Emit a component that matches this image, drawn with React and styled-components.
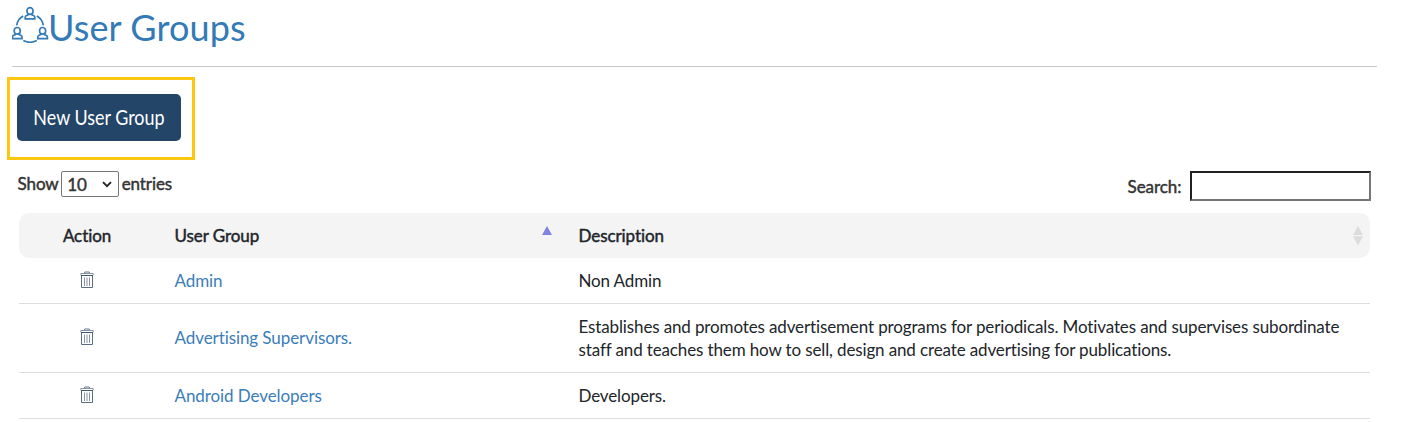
import React from "react";
import styled, { createGlobalStyle } from "styled-components";

const GlobalStyle = createGlobalStyle`
  *, *::before, *::after { box-sizing: border-box; }
  body {
    margin: 0;
    background: #fff;
    color: #212529;
    font-family: Lato, "Liberation Sans", sans-serif;
    font-size: 17px;
    font-variant-ligatures: none;
    letter-spacing: -0.08px;
    line-height: 23px;
    overflow: hidden;
  }
`;

const Page = styled.main`
  height: 422px;
  padding: 0 27px 0 12px;
  overflow: hidden;
`;

const Title = styled.h1`
  display: flex;
  align-items: flex-start;
  height: 67px;
  margin: 0;
  border-bottom: 1px solid #c8c8c8;
  color: #337ab7;
  font-size: 36px;
  font-weight: 400;
  letter-spacing: 0.12px;
  line-height: 44px;
`;

const TitleText = styled.span`
  margin-left: -1px;
  padding-top: 5px;
`;

const GroupGlyph = styled.svg`
  flex: none;
  width: 37px;
  height: 37px;
  margin-top: 6px;
`;

const Highlight = styled.div`
  width: 188px;
  height: 83px;
  margin: 10px 0 0 -5px;
  padding: 14px 7px;
  border: 3px solid #fdc70f;
`;

const PrimaryButton = styled.button`
  display: flex;
  justify-content: center;
  width: 164px;
  height: 47px;
  padding: 0;
  border: 0;
  border-radius: 5px;
  background: #234567;
  color: #fff;
  font: 400 20.5px/47px Lato, sans-serif;
`;

const ButtonLabel = styled.span`
  flex: none;
  transform: scaleX(0.875);
`;

const Controls = styled.div`
  display: flex;
  justify-content: space-between;
  height: 53px;
  padding: 11px 6px 0 5.5px;
  color: #333;
`;

const Control = styled.label`
  display: flex;
  align-items: center;
  height: ${(p) => p.$height}px;
  gap: ${(p) => p.$gap}px;
  -webkit-text-stroke: 0.45px currentColor;
`;

const ControlText = styled.span`
  padding-bottom: ${(p) => p.$raise || 0}px;
`;

const LengthBox = styled.span`
  display: flex;
  align-items: center;
  justify-content: space-between;
  width: 58px;
  height: 26px;
  padding: 0 6px 0 5px;
  border: 1px solid #767676;
  border-radius: 2px;
`;

const SearchInput = styled.input`
  width: 181px;
  height: 30px;
  border: 2px solid;
  border-color: #212121 #767676 #767676 #212121;
  background: #fff;
`;

const Table = styled.div`
  margin: 0 7px;
`;

const Row = styled.div`
  display: grid;
  grid-template-columns: 136px 404px 1fr;
  align-items: center;
  height: ${(p) => p.$height}px;
  border-bottom: 1px solid #ddd;
`;

const HeaderRow = styled(Row)`
  border: 0;
  border-radius: 10px;
  background: #f4f4f4;
  -webkit-text-stroke: 0.45px currentColor;
`;

const Cell = styled.div`
  display: flex;
  align-items: center;
  justify-content: ${(p) => (p.$center ? "center" : "space-between")};
  padding: ${(p) => (p.$center ? "0" : "0 6px 0 19.5px")};
  padding-bottom: ${(p) => (p.$tall ? 2 : 0)}px;
`;

const Description = styled.div`
  max-width: 800px;
  padding-left: 19.5px;
  letter-spacing: -0.13px;
`;

const GroupLink = styled.a`
  color: #3a7dba;
  text-decoration: none;
`;

const SortIcon = styled.svg`
  flex: none;
  width: 12px;
  height: 20px;
  stroke: none;
`;

const TrashIcon = styled.svg`
  width: 14px;
  height: 18px;
  margin: -1px 1px 0 0;
`;

function Person({ x, y }) {
  return (
    <g transform={`translate(${x} ${y})`}>
      <path d="M-3 3.7V2.8a3 2.9 0 0 1 6 0v.9a3 2.9 0 0 1-6 0Z" />
      <path d="M-2 5.9v1.2l-1.5.6c-.9.4-1.3 1.1-1.3 2v1.4h9.6v-1.4c0-.9-.4-1.6-1.3-2L2 7.1V5.9" />
    </g>
  );
}

function UsersIcon() {
  return (
    <GroupGlyph viewBox="0 0 37 37" fill="none" stroke="#337ab7" strokeWidth="1.7">
      <Person x={18} y={1.8} />
      <Person x={5.2} y={21.6} />
      <Person x={30.6} y={21.6} />
      <path d="M4.7 19.3C5.3 15.2 7.6 12 11.2 10M24.8 10c3.6 2 5.9 5.2 6.5 9.3M11.3 34.6c4.2 2.1 9.3 2.1 13.5 0" />
    </GroupGlyph>
  );
}

function Trash() {
  return (
    <TrashIcon viewBox="0 0 14 18" fill="none">
      <path d="M4.7 2V1h4.6v1" stroke="#68798b" />
      <path d="M.8 4.2V2.5h12.4v1.7" stroke="#8994a3" />
      <path d="M1 4.5h12" stroke="#42586f" />
      <path d="M1.5 5v11.5h11V5" stroke="#5a6d80" />
      <path d="M4.5 6.5v8.5M7 6.5v8.5M9.5 6.5v8.5" stroke="#8a8fa8" />
    </TrashIcon>
  );
}

const groups = [
  { name: "Admin", text: "Non Admin", height: 46 },
  {
    name: "Advertising Supervisors.",
    text: "Establishes and promotes advertisement programs for periodicals. Motivates and supervises subordinate staff and teaches them how to sell, design and create advertising for publications.",
    height: 69,
    tall: true,
  },
  { name: "Android Developers", text: "Developers.", height: 46 },
];

export default function App() {
  return (
    <Page>
      <GlobalStyle />
      <Title>
        <UsersIcon />
        <TitleText>User Groups</TitleText>
      </Title>
      <Highlight>
        <PrimaryButton>
          <ButtonLabel>New User Group</ButtonLabel>
        </PrimaryButton>
      </Highlight>
      <Controls>
        <Control $height={26} $gap={2.5}>
          <ControlText $raise={1}>Show</ControlText>
          <LengthBox>
            10
            <svg width="10" height="7" viewBox="0 0 10 7" fill="none" stroke="#222" strokeWidth="1.9">
              <path d="m1 1.2 4 4 4-4" />
            </svg>
          </LengthBox>
          <ControlText $raise={1}>entries</ControlText>
        </Control>
        <Control $height={30} $gap={8.7}>
          <ControlText>Search:</ControlText>
          <SearchInput />
        </Control>
      </Controls>
      <Table>
        <HeaderRow $height={45}>
          <Cell $center>Action</Cell>
          <Cell>
            User Group
            <SortIcon viewBox="0 0 12 20">
              <path d="M1 9 6 0l5 9Z" fill="#8184df" />
            </SortIcon>
          </Cell>
          <Cell>
            Description
            <SortIcon viewBox="0 0 12 20">
              <path d="M1 9 6 0l5 9ZM1 10.3h10l-5 9Z" fill="#dcdcdc" />
            </SortIcon>
          </Cell>
        </HeaderRow>
        {groups.map((g) => (
          <Row key={g.name} $height={g.height}>
            <Cell $center $tall={g.tall}>
              <Trash />
            </Cell>
            <Cell $tall={g.tall}>
              <GroupLink>{g.name}</GroupLink>
            </Cell>
            <Description>{g.text}</Description>
          </Row>
        ))}
      </Table>
    </Page>
  );
}
